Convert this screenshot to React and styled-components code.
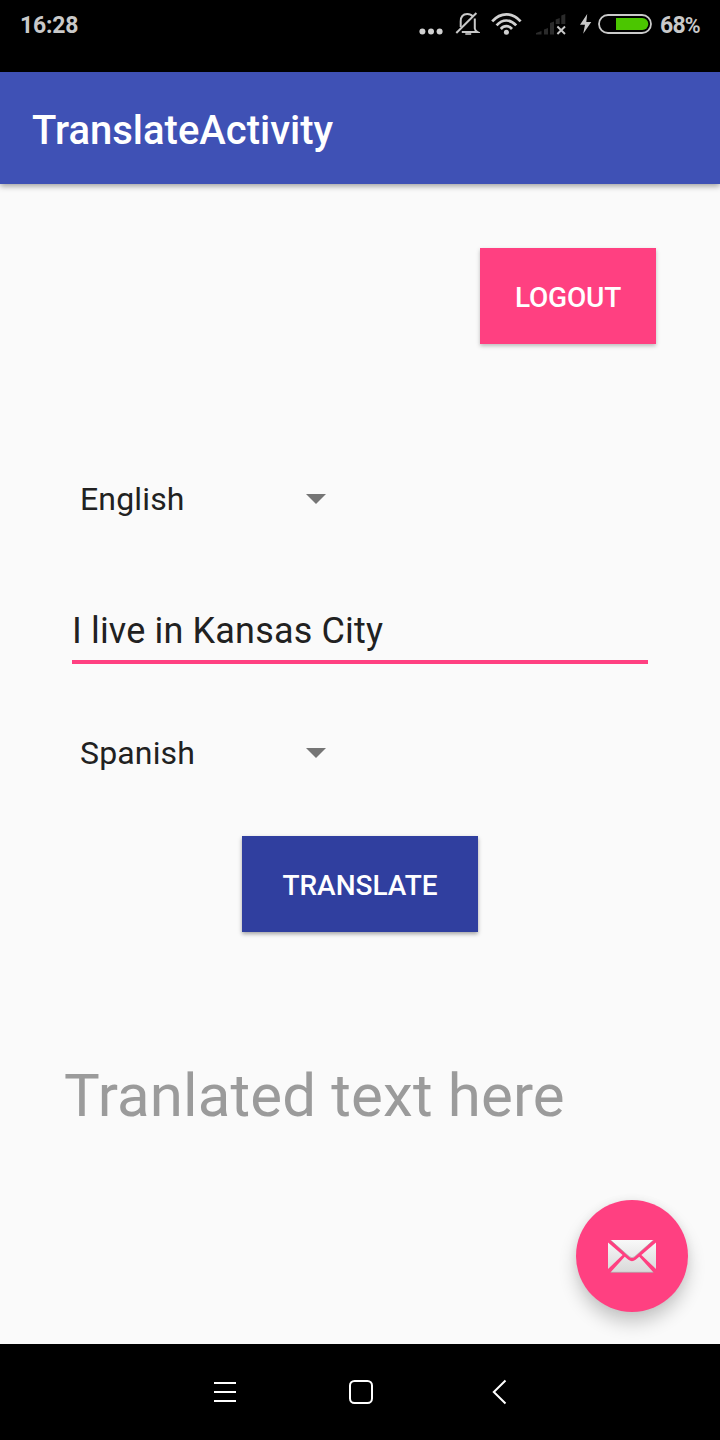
import React from 'react';
import styled, { createGlobalStyle } from 'styled-components';

const GlobalStyle = createGlobalStyle`
  * { box-sizing: border-box; }
  body { margin: 0; background: #fafafa; font-family: Roboto, sans-serif; }
`;

const Screen = styled.div`
  width: 720px;
  height: 1440px;
  display: flex;
  flex-direction: column;
  overflow: hidden;
  background: #fafafa;
`;

const StatusBar = styled.header`
  height: 72px;
  flex: none;
  display: flex;
  align-items: flex-start;
  justify-content: space-between;
  padding: 0 20px;
  background: #000;
  color: #c9c9c9;
`;

const StatusText = styled.span`
  font-size: 23px;
  font-weight: 700;
  line-height: 52px;
  letter-spacing: ${(p) => p.$tracking || '0'};
`;

const Percent = styled.span`
  font-size: 21.5px;
  font-weight: 600;
  letter-spacing: -1.2px;
`;

const StatusIcons = styled.div`
  display: flex;
  width: 282px;
  height: 50px;
`;

const StatusIcon = styled.svg`
  display: block;
  flex: none;
  height: 50px;
  margin-right: ${(p) => p.$gap}px;
`;

const AppBar = styled.div`
  height: 112px;
  flex: none;
  display: flex;
  align-items: center;
  padding: 6px 32px 0;
  background: #3f51b5;
  box-shadow: 0 2px 6px rgba(0, 0, 0, 0.38);
  z-index: 1;
`;

const Title = styled.h1`
  margin: 0;
  color: #fff;
  font-size: 40px;
  font-weight: 500;
  line-height: 48px;
`;

const Content = styled.main`
  position: relative;
  height: 1160px;
  flex: none;
  display: flex;
  flex-direction: column;
  align-items: flex-start;
  padding: 64px 64px 0;
`;

const Button = styled.button`
  width: ${(p) => p.$width}px;
  height: 96px;
  align-self: ${(p) => p.$align};
  margin: ${(p) => p.$top || 0}px 0 0;
  padding: 3px 0 0;
  border: 0;
  background: ${(p) => p.$color};
  color: #fff;
  font: 500 28px/32px Roboto, sans-serif;
  letter-spacing: ${(p) => p.$tracking || '0'};
  text-transform: uppercase;
  box-shadow: 0 2px 4px rgba(0, 0, 0, ${(p) => p.$shade});
`;

const Spinner = styled.div`
  width: 262px;
  height: 48px;
  margin-top: ${(p) => p.$top}px;
  padding-left: 16px;
  display: flex;
  align-items: center;
  justify-content: space-between;
`;

const SpinnerLabel = styled.span`
  padding-top: 2px;
  color: #212121;
  font-size: 32px;
  line-height: 40px;
  letter-spacing: 0.15px;
`;

const Caret = styled.svg`
  display: block;
  margin-top: 2px;
`;

const TextInput = styled.div`
  width: 576px;
  height: 62px;
  margin: 80px 0 0 8px;
  border-bottom: 4px solid #ff4081;
  color: #212121;
  font-size: 36px;
  line-height: 58px;
  letter-spacing: 0.16px;
`;

const Result = styled.p`
  margin: 129px 0 0;
  color: #9b9b9b;
  font-size: 60px;
  line-height: 70px;
  letter-spacing: 0.14px;
`;

const Fab = styled.button`
  position: absolute;
  right: 32px;
  bottom: 32px;
  width: 112px;
  height: 112px;
  display: flex;
  align-items: center;
  justify-content: center;
  padding: 0;
  border: 0;
  border-radius: 50%;
  background: #ff4081;
  box-shadow: 0 11px 18px rgba(0, 0, 0, 0.2), 0 0 10px rgba(0, 0, 0, 0.06);
`;

const NavBar = styled.nav`
  height: 96px;
  flex: none;
  display: flex;
  align-items: center;
  gap: 111px;
  padding-left: 213px;
  background: #000;
`;

const NavIcon = styled.svg`
  display: block;
  fill: none;
  stroke: #fff;
  stroke-width: 2;
`;

function LanguageSpinner({ top, children }) {
  return (
    <Spinner $top={top}>
      <SpinnerLabel>{children}</SpinnerLabel>
      <Caret width="20" height="10" viewBox="0 0 20 10">
        <path d="M0 0H20L10 10Z" fill="#757575" />
      </Caret>
    </Spinner>
  );
}

export default function App() {
  return (
    <Screen>
      <GlobalStyle />
      <StatusBar>
        <StatusText $tracking="-0.2px">16:28</StatusText>
        <StatusIcons>
          <StatusIcon $gap={11} width="26" viewBox="418 0 26 50" fill="#d0d0d0">
            <circle cx="422.4" cy="31.6" r="3" />
            <circle cx="431" cy="31.6" r="3" />
            <circle cx="439.6" cy="31.6" r="3" />
          </StatusIcon>
          <StatusIcon $gap={11} width="25" viewBox="455 0 25 50" fill="none" stroke="#c8c8c8" strokeWidth="2">
            <path d="M456.3 33L476.4 13" />
            <path d="M460.7 27V21.5C460.7 17 463 14 467.2 14C469.8 14 471.6 14.9 472.7 16.4M474.8 18.5V28.5Q475 30.6 477.5 32H461.8" />
            <path d="M465.3 34H471.2" stroke="#a0a0a0" />
          </StatusIcon>
          <StatusIcon $gap={13} width="32" viewBox="491 0 32 50" fill="none" stroke="#d0d0d0" strokeWidth="2.7">
            <path d="M492.2 21.3Q498.5 14.3 506.4 14.3T520.6 21.3" />
            <path d="M496.6 25.4Q501 20.5 506.4 20.5T516.2 25.4" />
            <path d="M500.8 29Q503.2 26.2 506.4 26.2T512 29" />
            <circle cx="506.4" cy="32.3" r="2.5" fill="#d0d0d0" stroke="none" />
          </StatusIcon>
          <StatusIcon $gap={12} width="31" viewBox="536 0 31 50">
            <path d="M536 34.5V33L541.5 31V34.5ZM544 34.5V29.5L548 28V34.5ZM550 34.5V23L554 21.5V34.5ZM555.7 24V19.5L559.7 18V24ZM561.3 24V15.5L565.3 14V24Z" fill="#2b2b2b" />
            <path d="M557.4 26.5L565 34M565 26.5L557.4 34" fill="none" stroke="#c8c8c8" strokeWidth="1.9" />
          </StatusIcon>
          <StatusIcon $gap={5} width="14" viewBox="579 0 14 50" fill="#c8c8c8">
            <path d="M587.2 14L580 24.8H585L583.2 33.8L591.3 21.9H586.3Z" />
          </StatusIcon>
          <StatusIcon $gap={7} width="55" viewBox="598 0 55 50">
            <rect x="599" y="15" width="52" height="18" rx="9" fill="none" stroke="#cacaca" strokeWidth="1.8" />
            <path d="M616 18H642.3A6 6 0 0 1 642.3 30H616Z" fill="#4bc600" />
          </StatusIcon>
          <StatusText $tracking="-0.8px">68<Percent>%</Percent></StatusText>
        </StatusIcons>
      </StatusBar>
      <AppBar>
        <Title>TranslateActivity</Title>
      </AppBar>
      <Content>
        <Button $width={176} $align="flex-end" $color="#ff4081" $shade={0.25} $tracking="-0.2px">Logout</Button>
        <LanguageSpinner top={130}>English</LanguageSpinner>
        <TextInput>I live in Kansas City</TextInput>
        <LanguageSpinner top={64}>Spanish</LanguageSpinner>
        <Button $width={236} $align="center" $top={60} $color="#303f9f" $shade={0.35}>Translate</Button>
        <Result>Tranlated text here</Result>
        <Fab aria-label="Send mail">
          <svg width="48" height="34" viewBox="0 0 48 34">
            <defs>
              <linearGradient id="paper" gradientUnits="userSpaceOnUse" x1="0" y1="0" x2="0" y2="34">
                <stop offset="0" stopColor="#fafafa" />
                <stop offset="1" stopColor="#d8d8d8" />
              </linearGradient>
            </defs>
            <g fill="url(#paper)">
              <path d="M2.5 1H45.5L26.5 17.9Q24 20 21.5 17.9Z" />
              <path d="M0 3.5L14.6 16L0 30Z" />
              <path d="M48 3.5L33.4 16L48 30Z" />
              <path d="M2.5 33.4H45.5L31.3 17.8L27.6 20.8Q24 23.6 20.4 20.8L16.7 17.8Z" />
            </g>
            <path d="M3 1.5L21.5 17.7Q24 19.8 26.5 17.7L45 1.5M2.5 33.3H45.5" fill="none" stroke="#8a8a8a" strokeOpacity=".55" strokeWidth=".8" />
          </svg>
        </Fab>
      </Content>
      <NavBar>
        <NavIcon width="24" height="24" viewBox="213 1380 24 24">
          <path d="M214 1383H236M214 1392H236M214 1401H236" />
        </NavIcon>
        <NavIcon width="26" height="26" viewBox="348 1379 26 26">
          <rect x="350" y="1381" width="22" height="22" rx="4.5" />
        </NavIcon>
        <NavIcon width="30" height="26" viewBox="485 1379 30 26">
          <path d="M505.5 1380.5L493.8 1392L505.5 1403.5" />
        </NavIcon>
      </NavBar>
    </Screen>
  );
}
